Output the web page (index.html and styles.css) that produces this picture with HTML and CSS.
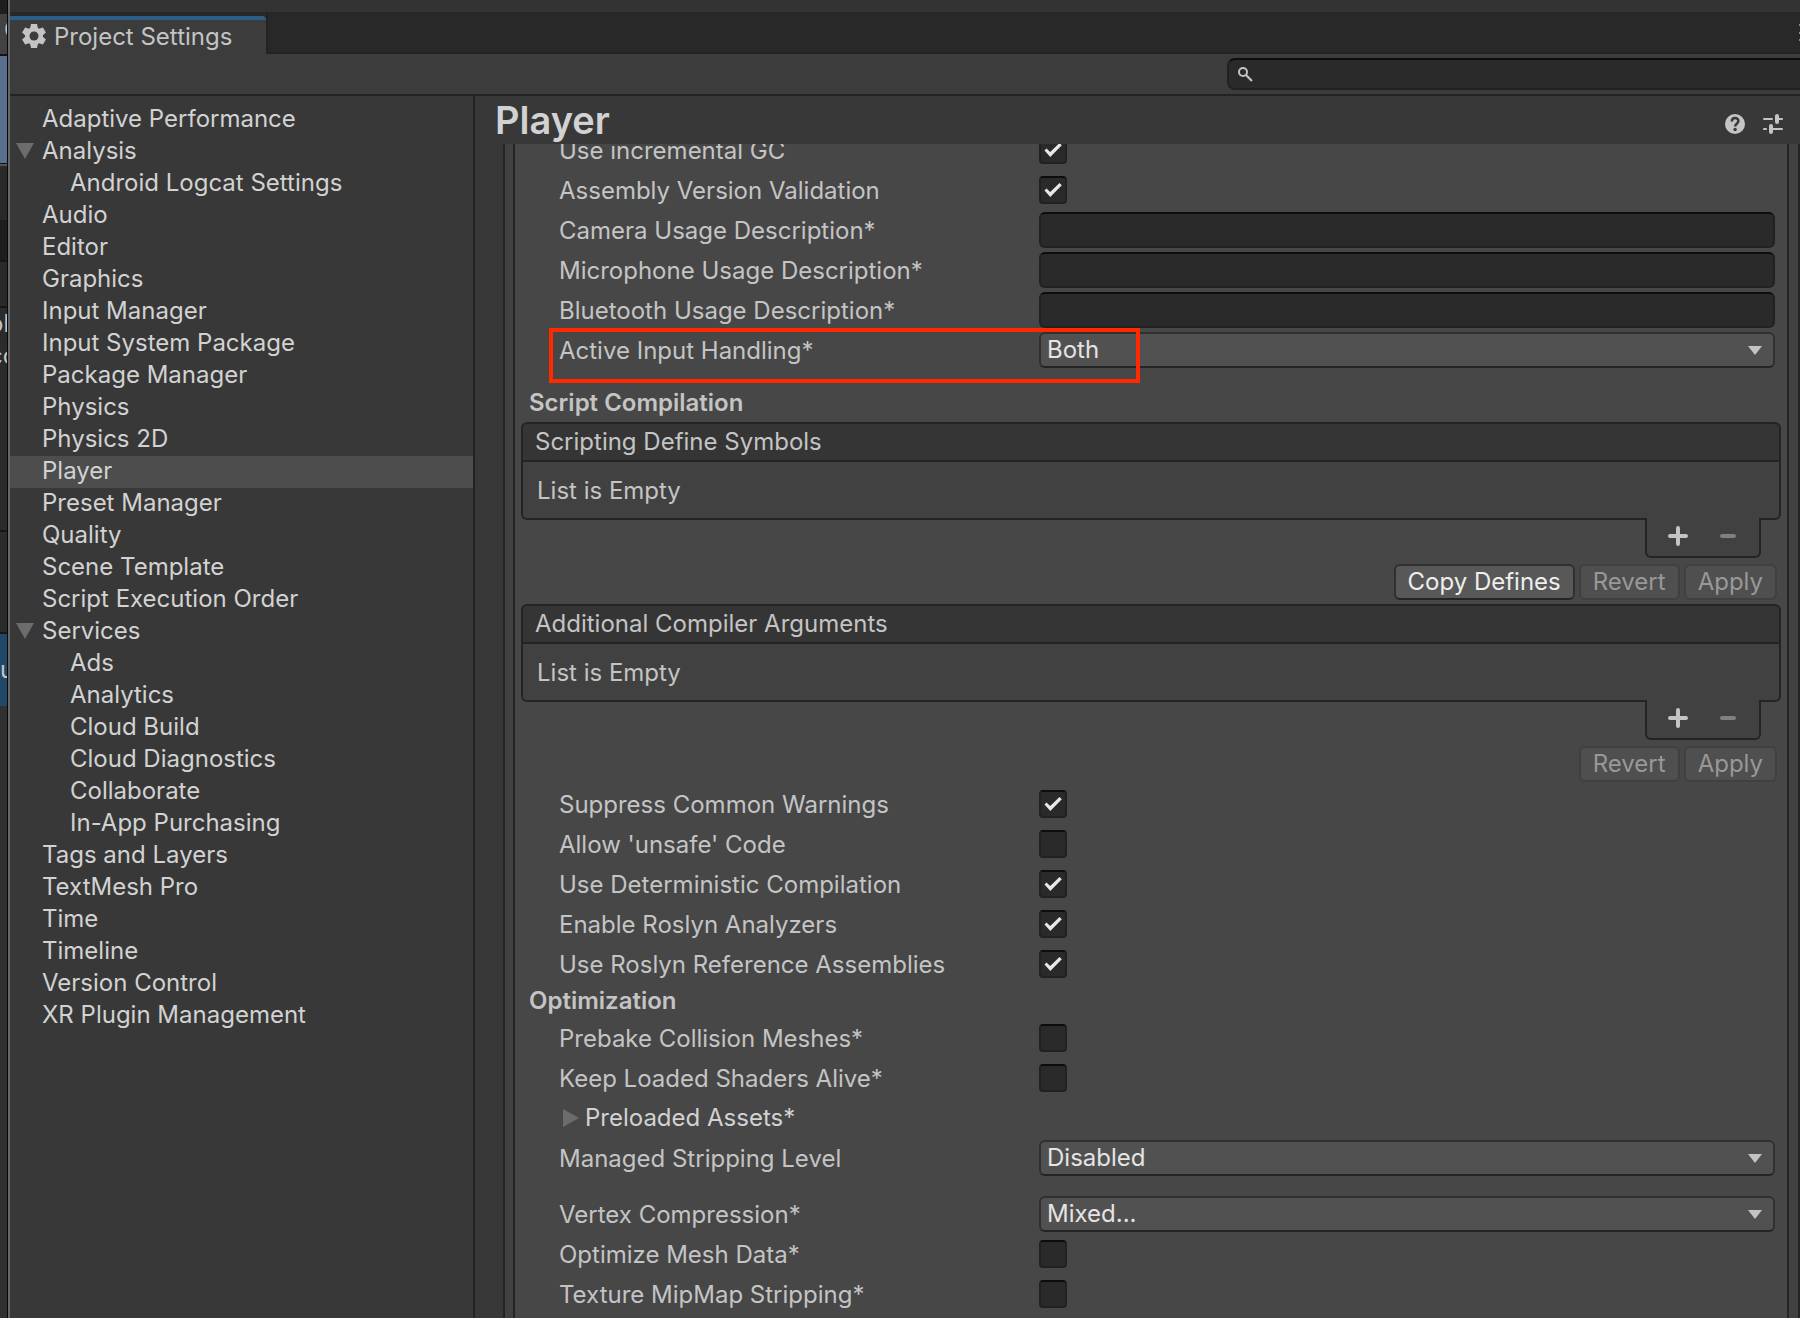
FILE: index.html
```html
<!DOCTYPE html>
<html lang="en">
<head>
    <meta charset="UTF-8">
    <meta name="viewport" content="width=device-width, initial-scale=1.0">
    <title>Project Settings</title>
    <link rel="stylesheet" href="styles.css">
</head>
<body>
    <!-- editor window behind the settings window -->
    <div class="behind">
        <div class="strip strip-top"></div>
        <div class="strip strip-tab">C</div>
        <div class="strip strip-scene"></div>
        <div class="strip strip-bar"></div>
        <div class="strip strip-dark"></div>
        <div class="strip strip-tools"></div>
        <div class="strip strip-text"><span>ol</span><span>co</span></div>
        <div class="strip strip-panel"></div>
        <div class="strip strip-selected">u</div>
        <div class="strip strip-rest"></div>
    </div>

    <div class="window">
        <div class="titlebar"></div>
        <div class="tabs">
            <div class="tab">
                <svg viewBox="0 0 24 24" width="24" height="24">
                    <g fill="#c4c4c4">
                        <circle cx="12" cy="12" r="9"/>
                        <path id="tooth" d="M9 0h6l1 5v14l-1 5H9l-1-5V5z"/>
                        <use href="#tooth" transform="rotate(60 12 12)"/>
                        <use href="#tooth" transform="rotate(120 12 12)"/>
                    </g>
                    <circle cx="12" cy="12" r="4.5" fill="#3c3c3c"/>
                </svg>
                <span>Project Settings</span>
            </div>
            <div class="tab-rest">
                <svg width="1" height="18" viewBox="0 0 1 18"><path fill="#8a8a8a" d="M0 0h1v2H0zM0 8h1v2H0zM0 15h1v2H0z"/></svg>
            </div>
        </div>
        <div class="toolbar">
            <label class="search">
                <svg viewBox="0 0 16 16" width="16" height="16" fill="none" stroke="#c4c4c4">
                    <circle cx="6" cy="6" r="4" stroke-width="2"/>
                    <path d="M9 9l6 6" stroke-width="2.2"/>
                </svg>
                <input type="search" aria-label="Search settings">
            </label>
        </div>

        <div class="main">
            <nav class="sidebar">
                <a href="#">Adaptive Performance</a>
                <a href="#" class="open">Analysis</a>
                <a href="#" class="child">Android Logcat Settings</a>
                <a href="#">Audio</a>
                <a href="#">Editor</a>
                <a href="#">Graphics</a>
                <a href="#">Input Manager</a>
                <a href="#">Input System Package</a>
                <a href="#">Package Manager</a>
                <a href="#">Physics</a>
                <a href="#">Physics 2D</a>
                <a href="#" class="active">Player</a>
                <a href="#">Preset Manager</a>
                <a href="#">Quality</a>
                <a href="#">Scene Template</a>
                <a href="#">Script Execution Order</a>
                <a href="#" class="open">Services</a>
                <a href="#" class="child">Ads</a>
                <a href="#" class="child">Analytics</a>
                <a href="#" class="child">Cloud Build</a>
                <a href="#" class="child">Cloud Diagnostics</a>
                <a href="#" class="child">Collaborate</a>
                <a href="#" class="child">In-App Purchasing</a>
                <a href="#">Tags and Layers</a>
                <a href="#">TextMesh Pro</a>
                <a href="#">Time</a>
                <a href="#">Timeline</a>
                <a href="#">Version Control</a>
                <a href="#">XR Plugin Management</a>
            </nav>

            <main class="content">
                <header class="page-header">
                    <h1>Player</h1>
                    <button class="icon-btn" aria-label="Help">
                        <svg viewBox="0 0 20 20" width="20" height="20">
                            <circle cx="10" cy="10" r="10" fill="#c4c4c4"/>
                            <path d="M6.800 7.500c0-4.600 6.600-4.400 6.600-.5 0 2.500-3.200 2.500-3.200 5.500" fill="none" stroke="#383838" stroke-width="2.500"/>
                            <circle cx="10.100" cy="15.500" r="1.700" fill="#383838"/>
                        </svg>
                    </button>
                    <button class="icon-btn" aria-label="Presets">
                        <svg viewBox="0 0 20 20" width="20" height="20" fill="none" stroke="#c4c4c4" stroke-linecap="round">
                            <path d="M1 5h8M13 5h6M1 15h2M8 15h11" stroke-width="2"/>
                            <path d="M14 2v6M8 12v6" stroke-width="4"/>
                        </svg>
                    </button>
                </header>

                <div class="scroll">
                    <div class="outer">
                        <form class="panel">
                            <div class="row">
                                <label for="gc">Use incremental GC</label>
                                <input type="checkbox" id="gc" checked>
                            </div>
                            <div class="row">
                                <label for="assembly">Assembly Version Validation</label>
                                <input type="checkbox" id="assembly" checked>
                            </div>
                            <div class="row">
                                <label for="camera">Camera Usage Description*</label>
                                <input type="text" id="camera">
                            </div>
                            <div class="row">
                                <label for="microphone">Microphone Usage Description*</label>
                                <input type="text" id="microphone">
                            </div>
                            <div class="row">
                                <label for="bluetooth">Bluetooth Usage Description*</label>
                                <input type="text" id="bluetooth">
                            </div>
                            <div class="row marked">
                                <label for="input-handling">Active Input Handling*</label>
                                <div class="select">
                                    <select id="input-handling"><option>Both</option></select>
                                </div>
                            </div>

                            <h2>Script Compilation</h2>
                            <section class="list">
                                <h3>Scripting Define Symbols</h3>
                                <p>List is Empty</p>
                                <div class="list-footer">
                                    <button type="button" aria-label="Add symbol"><svg viewBox="0 0 20 20" width="20" height="20"><path d="M10 2v16M2 10h16"/></svg></button>
                                    <button type="button" aria-label="Remove symbol" disabled><svg viewBox="0 0 20 20" width="20" height="20"><path d="M4 10h12"/></svg></button>
                                </div>
                            </section>
                            <div class="actions">
                                <button type="button">Copy Defines</button>
                                <button type="button" disabled>Revert</button>
                                <button type="button" disabled>Apply</button>
                            </div>
                            <section class="list">
                                <h3>Additional Compiler Arguments</h3>
                                <p>List is Empty</p>
                                <div class="list-footer">
                                    <button type="button" aria-label="Add argument"><svg viewBox="0 0 20 20" width="20" height="20"><path d="M10 2v16M2 10h16"/></svg></button>
                                    <button type="button" aria-label="Remove argument" disabled><svg viewBox="0 0 20 20" width="20" height="20"><path d="M4 10h12"/></svg></button>
                                </div>
                            </section>
                            <div class="actions">
                                <button type="button" disabled>Revert</button>
                                <button type="button" disabled>Apply</button>
                            </div>

                            <div class="row">
                                <label for="warnings">Suppress Common Warnings</label>
                                <input type="checkbox" id="warnings" checked>
                            </div>
                            <div class="row">
                                <label for="unsafe">Allow 'unsafe' Code</label>
                                <input type="checkbox" id="unsafe">
                            </div>
                            <div class="row">
                                <label for="deterministic">Use Deterministic Compilation</label>
                                <input type="checkbox" id="deterministic" checked>
                            </div>
                            <div class="row">
                                <label for="analyzers">Enable Roslyn Analyzers</label>
                                <input type="checkbox" id="analyzers" checked>
                            </div>
                            <div class="row">
                                <label for="roslyn-ref">Use Roslyn Reference Assemblies</label>
                                <input type="checkbox" id="roslyn-ref" checked>
                            </div>

                            <h2 class="tight">Optimization</h2>
                            <div class="row">
                                <label for="prebake">Prebake Collision Meshes*</label>
                                <input type="checkbox" id="prebake">
                            </div>
                            <div class="row">
                                <label for="shaders">Keep Loaded Shaders Alive*</label>
                                <input type="checkbox" id="shaders">
                            </div>
                            <details class="row foldout">
                                <summary>Preloaded Assets*</summary>
                            </details>
                            <div class="row">
                                <label for="stripping">Managed Stripping Level</label>
                                <div class="select">
                                    <select id="stripping"><option>Disabled</option></select>
                                </div>
                            </div>
                            <div class="row spaced">
                                <label for="vertex">Vertex Compression*</label>
                                <div class="select">
                                    <select id="vertex"><option>Mixed...</option></select>
                                </div>
                            </div>
                            <div class="row">
                                <label for="mesh">Optimize Mesh Data*</label>
                                <input type="checkbox" id="mesh">
                            </div>
                            <div class="row">
                                <label for="mipmap">Texture MipMap Stripping*</label>
                                <input type="checkbox" id="mipmap">
                            </div>
                        </form>
                    </div>
                </div>
            </main>
        </div>
    </div>
</body>
</html>
```

FILE: styles.css
```css
*, *::before, *::after {
    box-sizing: border-box;
}
body {
    margin: 0;
    height: 100vh;
    display: flex;
    overflow: hidden;
    background: #383838;
    color: #c4c4c4;
    font-family: 'Inter', sans-serif;
    font-size: 24px;
    line-height: 32px;
}
h1, h2, h3, p {
    margin: 0;
}
a {
    color: inherit;
    text-decoration: none;
}
button, input, select {
    font: inherit;
    color: inherit;
    margin: 0;
}

/* sliver of the window behind */
.behind {
    width: 8px;
    flex: none;
    display: flex;
    flex-direction: column;
    overflow: hidden;
    border-right: 1px solid #080808;
    background: #2b2b2b;
}
.strip {
    flex: none;
    overflow: hidden;
}
.strip-top {
    height: 14px;
    background: #1e1e1e;
}
.strip-tab {
    height: 42px;
    padding-left: 4px;
    border-bottom: 2px solid #141414;
    background: #424242;
}
.strip-scene {
    height: 108px;
    border-bottom: 1px solid #141414;
    background: #5a6f90;
}
.strip-bar {
    height: 56px;
    border-top: 2px solid #555;
    background: #292929;
}
.strip-dark {
    height: 42px;
    border-bottom: 2px solid #171717;
    background: #1d1d1d;
}
.strip-tools {
    height: 46px;
    border-bottom: 2px solid #171717;
    background: #292929;
}
.strip-text {
    height: 224px;
    border-bottom: 2px solid #171717;
}
.strip-text span {
    display: block;
    text-indent: -11px;
}
.strip-panel {
    height: 102px;
    border-bottom: 2px solid #171717;
}
.strip-selected {
    height: 72px;
    padding-top: 20px;
    background: #214868;
}
.strip-rest {
    flex: 1;
    background: #303030;
}

.window {
    flex: 1;
    min-width: 0;
    display: flex;
    flex-direction: column;
    border-left: 2px solid #666;
}
.titlebar {
    flex: none;
    height: 12px;
    background: #333;
}
.tabs {
    flex: none;
    height: 42px;
    display: flex;
    background: #282828;
}
.tab {
    display: flex;
    align-items: center;
    gap: 8px;
    margin-top: 4px;
    padding: 0 34px 2px 12px;
    border-top: 4px solid #2c5d87;
    border-top-right-radius: 4px;
    background: #3c3c3c;
}
.tab span {
    padding-top: 2px;
}
.tab-rest {
    flex: 1;
    display: flex;
    justify-content: flex-end;
    padding-top: 12px;
    border-left: 2px solid #232323;
    border-bottom: 2px solid #232323;
}
.toolbar {
    flex: none;
    display: flex;
    justify-content: flex-end;
    padding: 4px 0;
    border-bottom: 2px solid #232323;
    background: #3c3c3c;
}
.search {
    width: 32%;
    height: 32px;
    display: flex;
    align-items: center;
    gap: 6px;
    padding-left: 8px;
    border: 2px solid #212121;
    border-top-color: #0d0d0d;
    border-right: none;
    border-radius: 8px 0 0 8px;
    background: #2a2a2a;
}
.search input {
    flex: 1;
    min-width: 0;
    height: 28px;
    padding: 0;
    border: none;
    outline: none;
    background: transparent;
}

.main {
    flex: 1;
    min-height: 0;
    display: flex;
}
.sidebar {
    width: 465px;
    flex: none;
    padding-top: 8px;
    border-right: 2px solid #232323;
    color: #d2d2d2;
}
.sidebar a {
    display: flex;
    align-items: center;
    padding: 0 0 2px 32px;
    line-height: 30px;
}
.sidebar .child {
    padding-left: 60px;
}
.sidebar .open {
    padding-left: 6px;
}
.sidebar .open::before {
    content: '';
    margin-right: 8px;
    border: 9px solid transparent;
    border-top: 16px solid #6c6c6c;
    border-bottom: none;
}
.sidebar .active {
    background: #4d4d4d;
}

.content {
    flex: 1;
    min-width: 0;
    display: flex;
    flex-direction: column;
}
.page-header {
    flex: none;
    height: 48px;
    display: flex;
    align-items: center;
    gap: 18px;
    padding: 0 17px 0 20px;
}
.page-header h1 {
    flex: 1;
    font-size: 38px;
    font-weight: 600;
    color: #d2d2d2;
}
.icon-btn {
    display: flex;
    padding: 8px 0 0;
    border: none;
    background: none;
}
.scroll {
    flex: 1;
    min-height: 0;
    overflow: hidden;
    padding-left: 28px;
}
/* negative margin = scrolled a little past the first row */
.outer {
    height: 120vh;
    margin-top: -16px;
    padding: 0 9px 0 8px;
    border: 2px solid #242424;
    background: #414141;
}
.panel {
    height: 100%;
    padding: 2px 0 0;
    border: 2px solid #242424;
    border-top: none;
    background: #474747;
}

.row {
    display: grid;
    grid-template-columns: 480px 1fr;
    align-items: center;
    height: 36px;
    margin-bottom: 4px;
    padding: 0 12px 0 44px;
}
.row label {
    padding-top: 1px;
}
.spaced {
    margin-top: 20px;
}
.row input[type="text"],
.row select {
    width: 100%;
    height: 36px;
    padding: 0 6px;
    border: 2px solid #212121;
    border-radius: 6px;
    outline: none;
}
.row input[type="text"] {
    border-top-color: #0d0d0d;
    background: #2a2a2a;
}
.row select {
    appearance: none;
    border-color: #303030;
    border-bottom-color: #242424;
    background: #515151;
    color: #e4e4e4;
}
.select {
    position: relative;
}
.select::after {
    content: '';
    position: absolute;
    right: 13px;
    top: 14px;
    border: 7px solid transparent;
    border-top: 9px solid #c4c4c4;
    border-bottom: none;
    pointer-events: none;
}
.row input[type="checkbox"] {
    appearance: none;
    width: 28px;
    height: 28px;
    display: grid;
    place-items: center;
    border: 2px solid #212121;
    border-top-color: #0d0d0d;
    border-radius: 4px;
    background: #2a2a2a;
}
.row input[type="checkbox"]:checked::before {
    content: '';
    width: 18px;
    height: 14px;
    background: #e8e8e8;
    clip-path: path('M.5 7.500L2.500 5.500L6.200 9L15.500 0L17.800 2.200L6.300 14Z');
}
.foldout summary {
    display: flex;
    align-items: center;
    padding-left: 4px;
    color: #d2d2d2;
    list-style: none;
}
.foldout summary::before {
    content: '';
    margin-right: 6px;
    border: 9px solid transparent;
    border-left: 16px solid #6c6c6c;
    border-right: none;
}

/* red callout round the highlighted setting */
.marked {
    position: relative;
}
.marked::after {
    content: '';
    position: absolute;
    left: 34px;
    top: -4px;
    width: 591px;
    height: 55px;
    border: 4px solid #ff2a00;
    pointer-events: none;
}

h2 {
    height: 30px;
    margin: 20px 0 4px 14px;
    font-size: 24px;
    font-weight: 600;
    line-height: 30px;
}
h2.tight {
    margin-top: 4px;
}
.list {
    margin: 0 6px;
}
.list h3 {
    height: 40px;
    padding-left: 12px;
    border: 2px solid #242424;
    border-radius: 6px 6px 0 0;
    background: #353535;
    font-size: 24px;
    font-weight: 400;
    line-height: 36px;
}
.list p {
    height: 58px;
    padding-left: 14px;
    border: 2px solid #242424;
    border-top: none;
    border-radius: 0 0 6px 6px;
    background: #414141;
    line-height: 58px;
}
.list-footer {
    position: relative;
    display: flex;
    width: 116px;
    height: 40px;
    margin: -2px 20px 0 auto;
    padding: 0 6px 2px;
    border: 2px solid #242424;
    border-top: none;
    border-radius: 0 0 6px 6px;
    background: #414141;
}
.list-footer button {
    flex: 1;
    display: grid;
    place-items: center;
    padding: 0;
    border: none;
    background: none;
}
.list-footer path {
    fill: none;
    stroke: #c4c4c4;
    stroke-width: 4;
    stroke-linecap: round;
}
.list-footer button:disabled path {
    stroke: #808080;
}
.actions {
    display: flex;
    justify-content: flex-end;
    gap: 4px;
    margin: 6px 10px 4px;
}
.actions button {
    height: 36px;
    padding: 0 12px;
    border: 2px solid #303030;
    border-bottom-color: #242424;
    border-radius: 6px;
    background: #585858;
    color: #eee;
    line-height: 30px;
}
.actions button:disabled {
    border-color: #404040;
    background: #4f4f4f;
    color: #989898;
}
```
